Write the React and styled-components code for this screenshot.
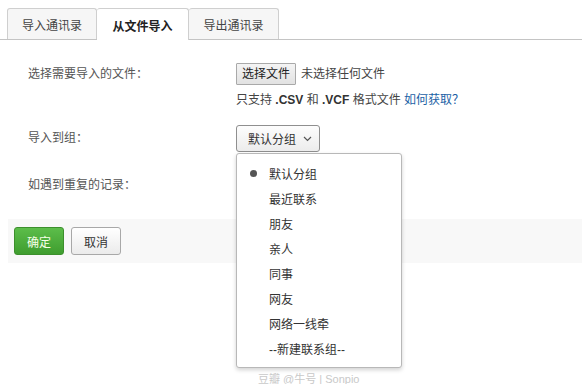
import React from 'react';
import styled, { createGlobalStyle } from 'styled-components';

const GlobalStyle = createGlobalStyle`
    html, body {
        margin: 0;
        padding: 0;
        background: #fff;
    }
    body {
        width: 582px;
        height: 384px;
        overflow: hidden;
        font-family: "Liberation Sans", "Noto Sans CJK SC", sans-serif;
        font-size: 12px;
        color: #333;
    }
`;

const Page = styled.div`
    position: relative;
    height: 384px;
`;

const TabBar = styled.div`
    display: flex;
    padding: 8px 0 0 7px;
    border-bottom: 1px solid #c4c4c4;
    height: 31px;
`;

const Tab = styled.div`
    width: ${p => p.$w}px;
    height: ${p => (p.$active ? 32 : 31)}px;
    box-sizing: border-box;
    display: flex;
    align-items: center;
    justify-content: center;
    border: 1px solid #cfcfcf;
    border-bottom: none;
    border-left: ${p => (p.$first ? '1px solid #cfcfcf' : 'none')};
    border-radius: 3px 3px 0 0;
    background: ${p => (p.$active ? '#fff' : '#f6f6f6')};
    font-weight: ${p => (p.$active ? 700 : 400)};
    color: ${p => (p.$active ? '#222' : '#444')};
    font-size: 12px;
    padding-top: 1px;
`;

const Form = styled.div`
    padding: 23px 0 0 28px;
`;

const Row = styled.div`
    display: flex;
    align-items: flex-start;
    margin-bottom: ${p => p.$gap}px;
`;

const Label = styled.div`
    width: 208px;
    color: #555;
    line-height: ${p => p.$lh || 22}px;
    flex-shrink: 0;
`;

const Field = styled.div`
    display: flex;
    flex-direction: column;
    gap: 4px;
`;

const Line = styled.div`
    display: flex;
    align-items: center;
    gap: 5px;
    line-height: 22px;
    color: #444;
`;

const Note = styled.div`
    line-height: 22px;
    color: #444;
    white-space: pre;
`;

const FileButton = styled.div`
    height: 22px;
    box-sizing: border-box;
    padding: 0 5px;
    display: flex;
    align-items: center;
    border: 1px solid #a9a9a9;
    background: linear-gradient(#f4f4f4, #e2e2e2);
    color: #222;
    border-radius: 1px;
`;

const Ext = styled.b`
    color: #333;
`;

const Link = styled.span`
    color: #1c5fa5;
`;

const SelectWrap = styled.div`
    position: relative;
`;

const SelectBox = styled.div`
    width: 84px;
    height: 27px;
    box-sizing: border-box;
    border: 1px solid #8f8f8f;
    border-radius: 3px;
    background: linear-gradient(#fdfdfd, #ececec);
    display: flex;
    align-items: center;
    padding-left: 11px;
    gap: 7px;
    color: #333;
`;

const Menu = styled.div`
    position: absolute;
    top: 28px;
    left: 0;
    width: 166px;
    height: 215px;
    box-sizing: border-box;
    background: #fff;
    border: 1px solid #b8b8b8;
    border-radius: 3px;
    box-shadow: 0 2px 4px rgba(0, 0, 0, 0.18);
    padding-top: 7px;
    z-index: 2;
`;

const MenuItem = styled.div`
    height: 25px;
    display: flex;
    align-items: center;
    padding-left: 32px;
    position: relative;
    color: #333;
    font-size: 12px;
`;

const Bullet = styled.span`
    position: absolute;
    left: 13px;
    top: 9px;
    width: 7px;
    height: 7px;
    border-radius: 50%;
    background: #555;
`;

const Footer = styled.div`
    margin: 0 0 0 8px;
    height: 44px;
    background: #f8f8f8;
    display: flex;
    align-items: center;
    gap: 7px;
    padding-left: 6px;
    position: absolute;
    top: 219px;
    left: 0;
    right: 0;
`;

const Btn = styled.div`
    width: 50px;
    height: 28px;
    box-sizing: border-box;
    display: flex;
    align-items: center;
    justify-content: center;
    border-radius: 3px;
    border: 1px solid ${p => (p.$primary ? '#3c8f2c' : '#a8a8a8')};
    background: ${p => (p.$primary
        ? 'linear-gradient(#5cbd4a, #3f9d2f)'
        : 'linear-gradient(#ffffff, #ebebeb)')};
    color: ${p => (p.$primary ? '#f6ffe8' : '#333')};
`;

const Watermark = styled.div`
    position: absolute;
    top: 370px;
    left: 258px;
    color: #c9c9c9;
    font-size: 11px;
`;

const tabs = [
    { name: '导入通讯录', w: 90 },
    { name: '从文件导入', w: 92, active: true },
    { name: '导出通讯录', w: 90 },
];

const groups = ['默认分组', '最近联系', '朋友', '亲人', '同事', '网友', '网络一线牵', '--新建联系组--'];

const Chevron = () => (
    <svg width="9" height="6" viewBox="0 0 9 6">
        <path d="M1 1 L4.5 4.5 L8 1" fill="none" stroke="#555" strokeWidth="1.2" />
    </svg>
);

const App = () => (
    <Page>
        <GlobalStyle />
        <TabBar>
            {tabs.map((t, i) => (
                <Tab key={t.name} $w={t.w} $active={t.active} $first={i === 0}>{t.name}</Tab>
            ))}
        </TabBar>
        <Form>
            <Row $gap={14}>
                <Label>选择需要导入的文件：</Label>
                <Field>
                    <Line>
                        <FileButton>选择文件</FileButton>
                        未选择任何文件
                    </Line>
                    <Note>
                        只支持 <Ext>.CSV</Ext> 和 <Ext>.VCF</Ext> 格式文件 <Link>如何获取？</Link>
                    </Note>
                </Field>
            </Row>
            <Row $gap={22}>
                <Label $lh={27}>导入到组：</Label>
                <SelectWrap>
                    <SelectBox>默认分组<Chevron /></SelectBox>
                    <Menu>
                        {groups.map((g, i) => (
                            <MenuItem key={g}>
                                {i === 0 && <Bullet />}
                                {g}
                            </MenuItem>
                        ))}
                    </Menu>
                </SelectWrap>
            </Row>
            <Row $gap={0}>
                <Label>如遇到重复的记录：</Label>
            </Row>
        </Form>
        <Footer>
            <Btn $primary>确定</Btn>
            <Btn>取消</Btn>
        </Footer>
        <Watermark>豆瓣 @牛号 | Sonpio</Watermark>
    </Page>
);

export default App;
